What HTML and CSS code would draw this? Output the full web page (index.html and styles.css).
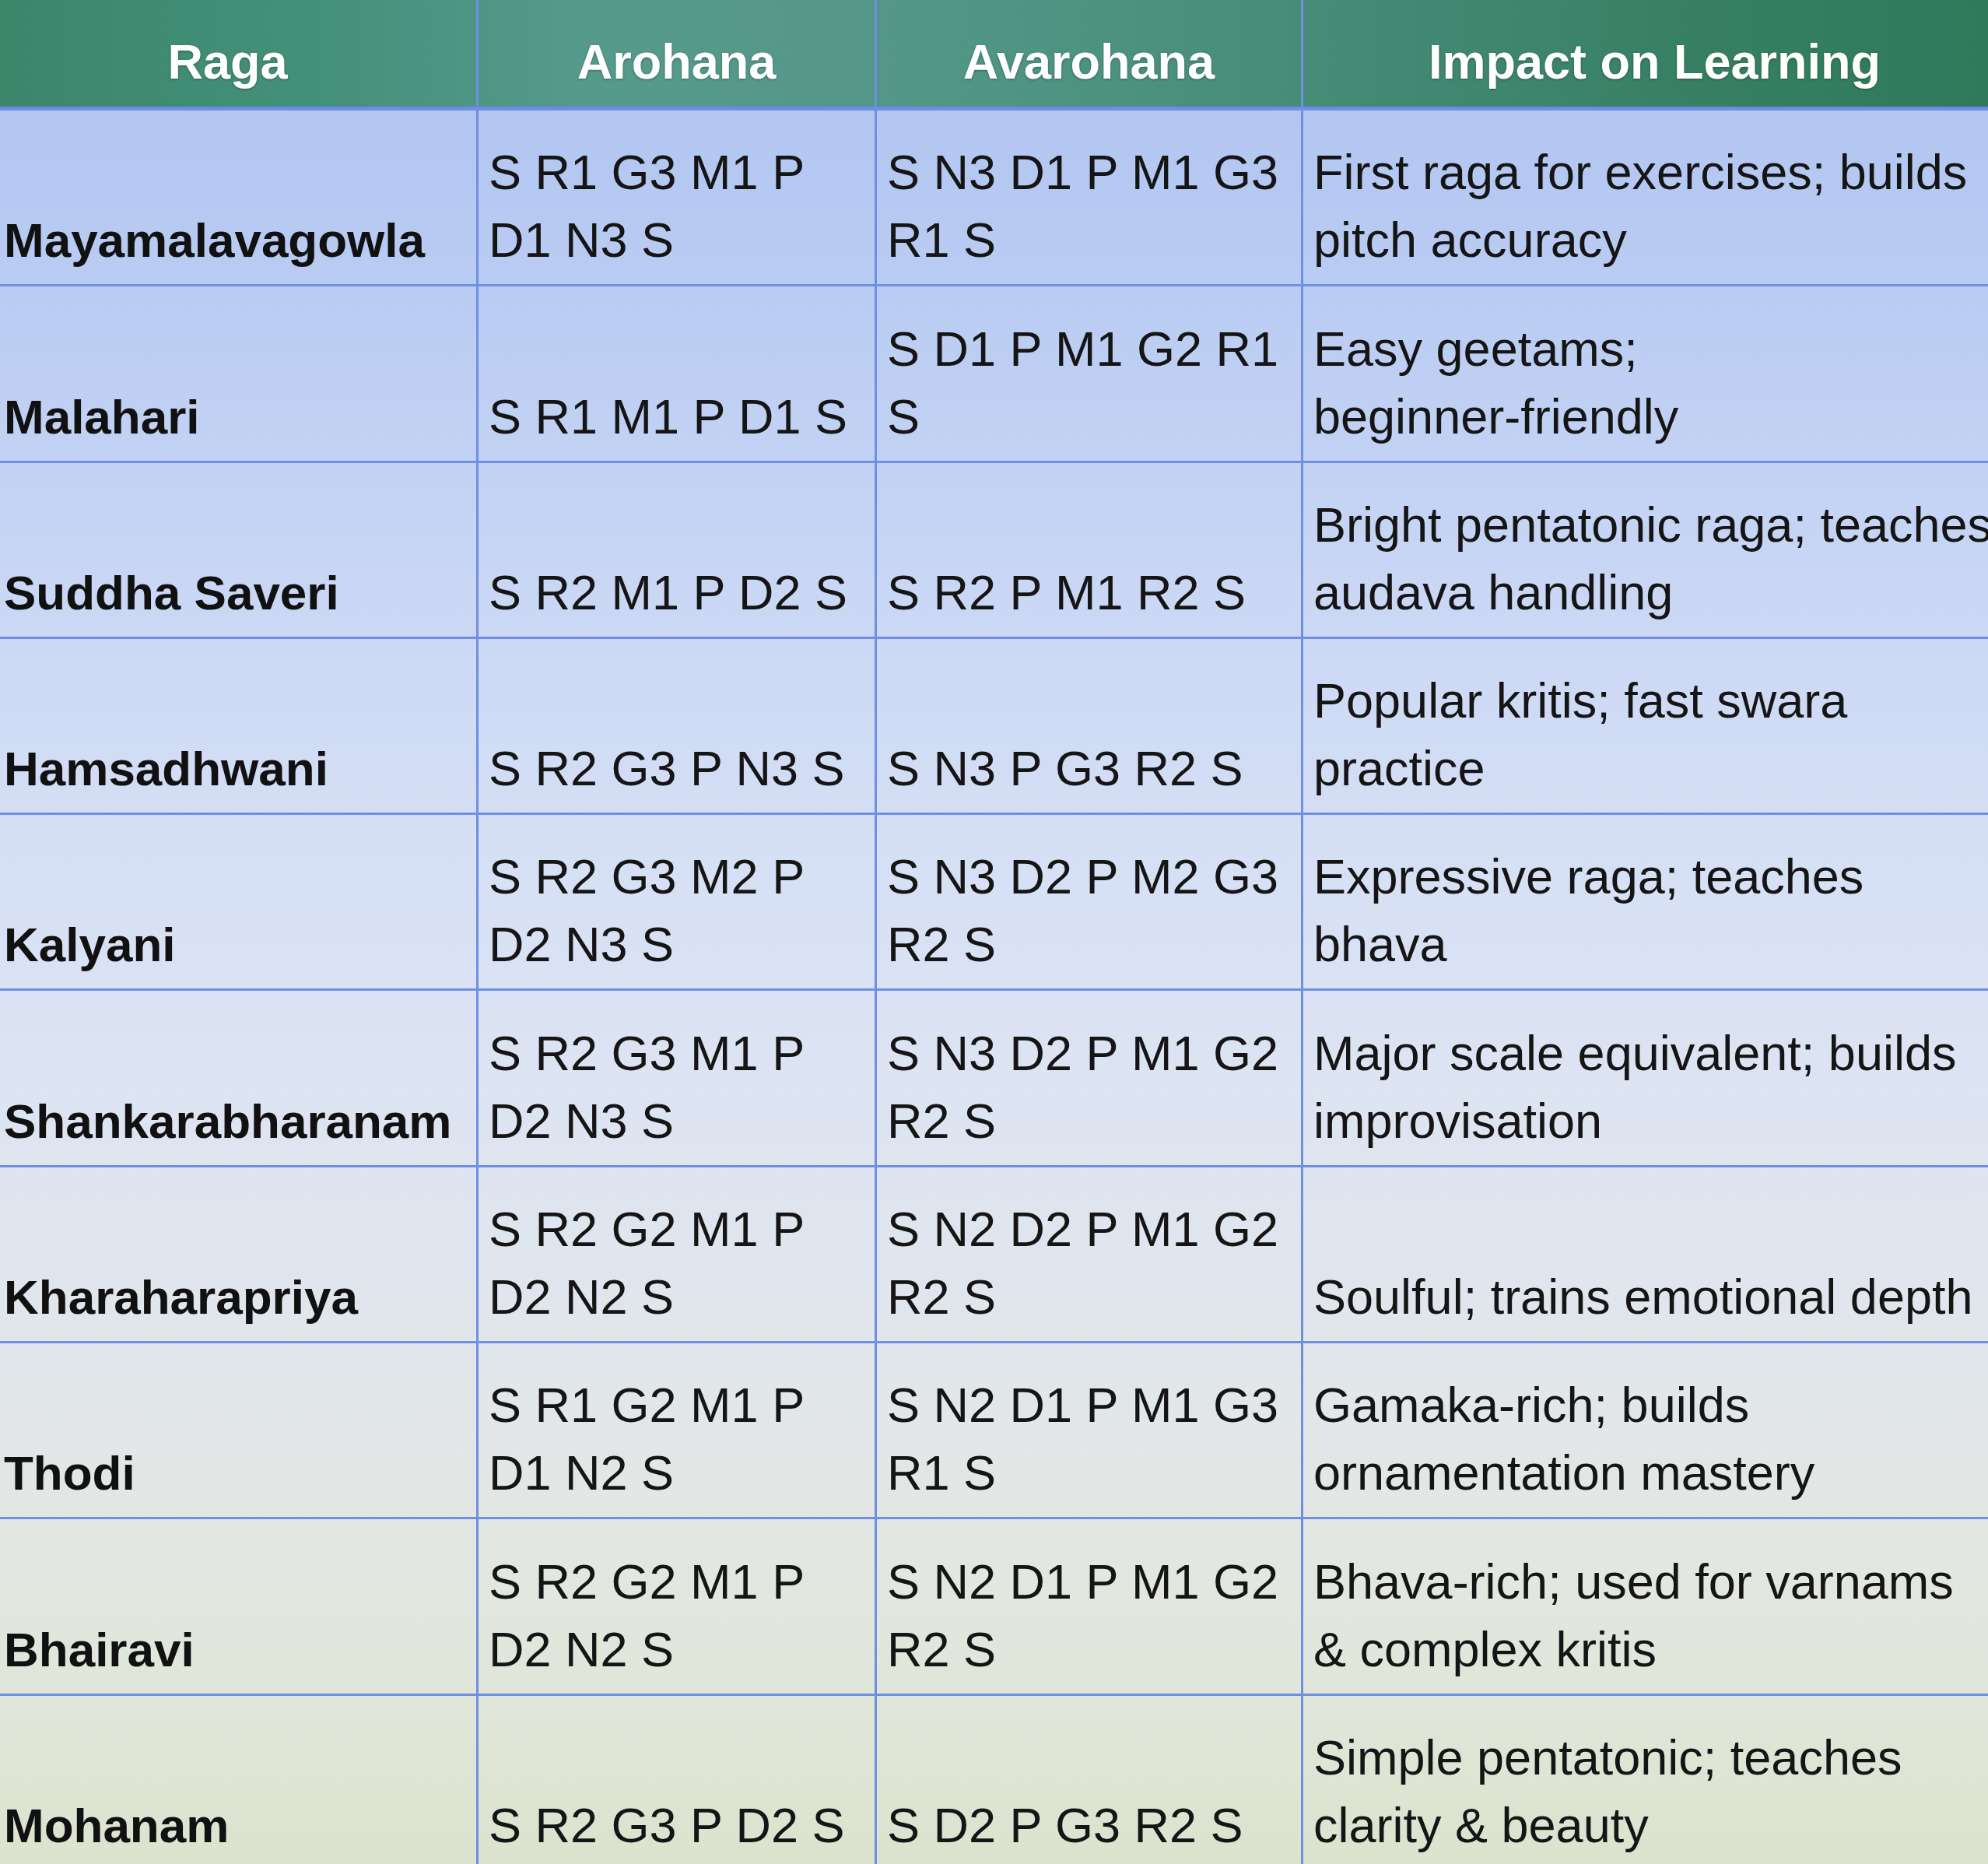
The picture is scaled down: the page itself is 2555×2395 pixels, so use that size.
FILE: index.html
```html
<!DOCTYPE html>
<html lang="en">
<head>
<meta charset="utf-8">
<title>Ragas and their impact on learning</title>
<link rel="stylesheet" href="styles.css">
</head>
<body>
<div class="sheet" role="table">
  <div class="hd hd-first" role="columnheader">Raga</div>
  <div class="hd" role="columnheader">Arohana</div>
  <div class="hd" role="columnheader">Avarohana</div>
  <div class="hd" role="columnheader">Impact on Learning</div>

  <div class="cell name">Mayamalavagowla</div>
  <div class="cell">S R1 G3 M1 P D1 N3 S</div>
  <div class="cell">S N3 D1 P M1 G3 R1 S</div>
  <div class="cell">First raga for exercises; builds pitch accuracy</div>

  <div class="cell name">Malahari</div>
  <div class="cell">S R1 M1 P D1 S</div>
  <div class="cell">S D1 P M1 G2 R1 S</div>
  <div class="cell">Easy geetams; <span class="nw">beginner-friendly</span></div>

  <div class="cell name">Suddha Saveri</div>
  <div class="cell">S R2 M1 P D2 S</div>
  <div class="cell">S R2 P M1 R2 S</div>
  <div class="cell">Bright pentatonic raga; teaches audava handling</div>

  <div class="cell name">Hamsadhwani</div>
  <div class="cell">S R2 G3 P N3 S</div>
  <div class="cell">S N3 P G3 R2 S</div>
  <div class="cell">Popular kritis; fast swara practice</div>

  <div class="cell name">Kalyani</div>
  <div class="cell">S R2 G3 M2 P D2 N3 S</div>
  <div class="cell">S N3 D2 P M2 G3 R2 S</div>
  <div class="cell">Expressive raga; teaches bhava</div>

  <div class="cell name">Shankarabharanam</div>
  <div class="cell">S R2 G3 M1 P D2 N3 S</div>
  <div class="cell">S N3 D2 P M1 G2 R2 S</div>
  <div class="cell">Major scale equivalent; builds improvisation</div>

  <div class="cell name">Kharaharapriya</div>
  <div class="cell">S R2 G2 M1 P D2 N2 S</div>
  <div class="cell">S N2 D2 P M1 G2 R2 S</div>
  <div class="cell">Soulful; trains emotional depth</div>

  <div class="cell name">Thodi</div>
  <div class="cell">S R1 G2 M1 P D1 N2 S</div>
  <div class="cell">S N2 D1 P M1 G3 R1 S</div>
  <div class="cell">Gamaka-rich; builds ornamentation mastery</div>

  <div class="cell name">Bhairavi</div>
  <div class="cell">S R2 G2 M1 P D2 N2 S</div>
  <div class="cell">S N2 D1 P M1 G2 R2 S</div>
  <div class="cell">Bhava-rich; used for varnams &amp; complex kritis</div>

  <div class="cell name">Mohanam</div>
  <div class="cell">S R2 G3 P D2 S</div>
  <div class="cell">S D2 P G3 R2 S</div>
  <div class="cell">Simple pentatonic; teaches clarity &amp; beauty</div>
</div>
</body>
</html>
```

FILE: styles.css
```css
html, body {
  margin: 0;
  padding: 0;
  overflow: hidden;
  background: #dfe5d6;
}

.sheet {
  display: grid;
  grid-template-columns: 620px 509px 545px 903px;
  grid-template-rows: 139px repeat(10, 223.3px);
  gap: 3px;
  width: 2586px;
  margin-left: -8px;
  background: #6f8fe3;
  font-family: "Liberation Sans", Arial, sans-serif;
}

.hd {
  box-sizing: border-box;
  display: flex;
  align-items: center;
  justify-content: center;
  padding: 20px 13px 0;
  border-bottom: 2px solid #6a8ae8;
  font-size: 63px;
  font-weight: bold;
  line-height: 88px;
  color: #ffffff;
  text-shadow: 0 1px 3px rgba(0, 0, 0, 0.35);
  background: linear-gradient(90deg,
    #3b866b 0%,
    #45907a 16%,
    #569a8c 30%,
    #55988a 42%,
    #4d927f 56%,
    #418872 72%,
    #367f63 86%,
    #2e7a5b 100%) fixed;
}

.hd-first {
  padding-right: 32px;
}

.cell {
  box-sizing: border-box;
  display: flex;
  flex-direction: column;
  justify-content: flex-end;
  padding: 0 13px 13px;
  font-size: 63px;
  line-height: 87px;
  color: #151515;
  background: linear-gradient(180deg,
    #b2c6f1 140px,
    #bdcef3 450px,
    #cbd8f5 800px,
    #d6e0f5 1100px,
    #dde4f2 1400px,
    #e1e6ec 1700px,
    #e3e7e2 2000px,
    #e0e6d8 2200px,
    #dbe3ce 2395px) fixed;
}

.name {
  font-size: 62px;
  font-weight: bold;
  color: #111111;
}

.nw {
  white-space: nowrap;
}
```
